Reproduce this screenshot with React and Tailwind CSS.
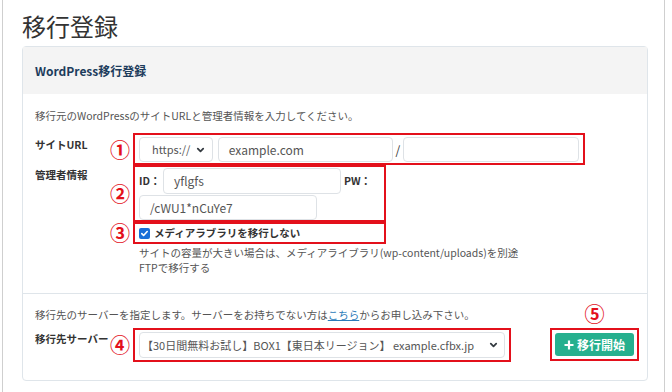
import React from 'react';

const font = { fontFamily: '"Noto Sans CJK JP", "Noto Sans", sans-serif' };

function Chevron() {
  return (
    <svg className="h-[8px] w-[9px] shrink-0" viewBox="0 0 10 8" fill="none" stroke="#343a40" strokeWidth={2} strokeLinecap="round" strokeLinejoin="round">
      <path d="M2 2.5l3 3 3-3" />
    </svg>
  );
}

function Circle({ n, className = '' }) {
  return <span className={`text-[20px] leading-[20px] font-bold text-[#e3101b] ${className}`}>{n}</span>;
}

function Field({ value, className = '' }) {
  return (
    <div className={`flex items-center border border-[#dee2e6] rounded-[4px] bg-white pl-[10px] text-[12px] text-[#555] ${className}`}>
      {value}
    </div>
  );
}

export default function App() {
  return (
    <div className="w-[672px] h-[392px] bg-white overflow-hidden" style={font}>
      <div className="ml-[2px] w-[663px] h-[392px] border-x border-[#cfcfcf] pl-[19px] pt-[10px]">
        <h1 className="text-[24px] leading-[32px] text-[#333]">移行登録</h1>

        <div className="mt-[4px] w-[626px] border border-[#dfe5ea] rounded-[4px]">
          <div className="h-[47px] bg-[#f4f4f4] px-[12px] flex items-center">
            <span className="text-[12px] font-bold text-[#1d3c5c]">WordPress移行登録</span>
          </div>

          {/* source site */}
          <div className="px-[12px] pt-[14px] pb-[18px]">
            <p className="text-[10.5px] leading-[16px] text-[#555]">
              移行元のWordPressのサイトURLと管理者情報を入力してください。
            </p>

            <div className="mt-[9px] flex">
              <div className="w-[75px] pt-[4px] text-[10.5px] leading-[16px] font-bold text-[#333]">サイトURL</div>
              <Circle n="①" className="w-[23px] pt-[7px]" />
              <div className="w-[452px] border-2 border-[#e3101b] px-[4px] pt-[2px] pb-[1px] flex items-center">
                <div className="w-[74px] h-[25px] border border-[#dee2e6] rounded-[4px] pl-[12px] pr-[7px] flex items-center justify-between text-[11px] text-[#555]">
                  https://
                  <Chevron />
                </div>
                <Field value="example.com" className="ml-[5px] w-[176px] h-[25px]" />
                <span className="w-[10px] text-center text-[12px] text-[#333]">/</span>
                <Field value="" className="w-[177px] h-[25px]" />
              </div>
            </div>

            <div className="flex">
              <div className="w-[75px] pt-[2px] text-[10.5px] leading-[16px] font-bold text-[#333]">管理者情報</div>
              <div className="flex flex-col">
                <div className="flex items-center">
                  <Circle n="②" className="w-[23px]" />
                  <div className="w-[253px] h-[57px] border-2 border-[#e3101b] px-[4px] pt-[1px] flex flex-wrap content-start items-center">
                    <span className="text-[10.5px] font-bold text-[#333] w-[24px]">ID：</span>
                    <Field value="yflgfs" className="w-[178px] h-[26px]" />
                    <span className="ml-[3px] text-[10.5px] font-bold text-[#333]">PW：</span>
                    <Field value="/cWU1*nCuYe7" className="mt-[1px] w-[178px] h-[25px] pl-[6px]" />
                  </div>
                </div>
                <div className="flex items-center">
                  <Circle n="③" className="w-[23px]" />
                  <div className="w-[253px] h-[22px] border-2 border-[#e3101b] px-[4px] flex items-center">
                    <span className="w-[11px] h-[11px] rounded-[2px] bg-[#1a6fd8] flex items-center justify-center">
                      <svg className="w-[9px] h-[9px]" viewBox="0 0 10 10" fill="none" stroke="white" strokeWidth={1.8} strokeLinecap="round" strokeLinejoin="round">
                        <path d="M2 5.2l2 2 4-4.4" />
                      </svg>
                    </span>
                    <span className="ml-[4px] text-[10.5px] font-bold text-[#333]">メディアラブラリを移行しない</span>
                  </div>
                </div>
                <p className="ml-[29px] mt-[1px] text-[10.5px] leading-[15px] text-[#555]">
                  サイトの容量が大きい場合は、メディアライブラリ(wp-content/uploads)を別途
                  <br />
                  FTPで移行する
                </p>
              </div>
            </div>
          </div>

          {/* destination server */}
          <div className="border-t border-[#dfe5ea] pl-[12px] pr-[8px] pt-[13px] pb-[18px] flex">
            <div className="flex-1">
              <p className="text-[10.5px] leading-[16px] text-[#555]">
                移行先のサーバーを指定します。サーバーをお持ちでない方は
                <span className="text-[#2b7bb9] underline">こちら</span>
                からお申し込み下さい。
              </p>
              <div className="mt-[5px] flex">
                <div className="w-[75px] pt-[3px] text-[10.5px] leading-[16px] font-bold text-[#333]">移行先サーバー</div>
                <Circle n="④" className="w-[23px] pt-[7px]" />
                <div className="w-[378px] h-[34px] border-2 border-[#e3101b] px-[4px] flex items-center">
                  <div className="w-full h-[26px] border border-[#dee2e6] rounded-[4px] pl-[2px] pr-[6px] flex items-center justify-between text-[11px] text-[#555] whitespace-nowrap">
                    <span>【30日間無料お試し】BOX1【東日本リージョン】 example.cfbx.jp</span>
                    <Chevron />
                  </div>
                </div>
              </div>
            </div>
            <div className="w-[89px] flex flex-col items-center">
              <Circle n="⑤" className="-mt-[3px]" />
              <div className="mt-[4px] border-2 border-[#e3101b] p-[3px]">
                <div className="w-[79px] h-[23px] rounded-[3px] bg-[#26b08e] flex items-center justify-center gap-[3px] text-white text-[12px] font-bold">
                  <svg className="w-[10px] h-[10px]" viewBox="0 0 10 10" fill="none" stroke="white" strokeWidth={2.2}>
                    <path d="M5 0.5v9M0.5 5h9" />
                  </svg>
                  移行開始
                </div>
              </div>
            </div>
          </div>
        </div>
      </div>
    </div>
  );
}
